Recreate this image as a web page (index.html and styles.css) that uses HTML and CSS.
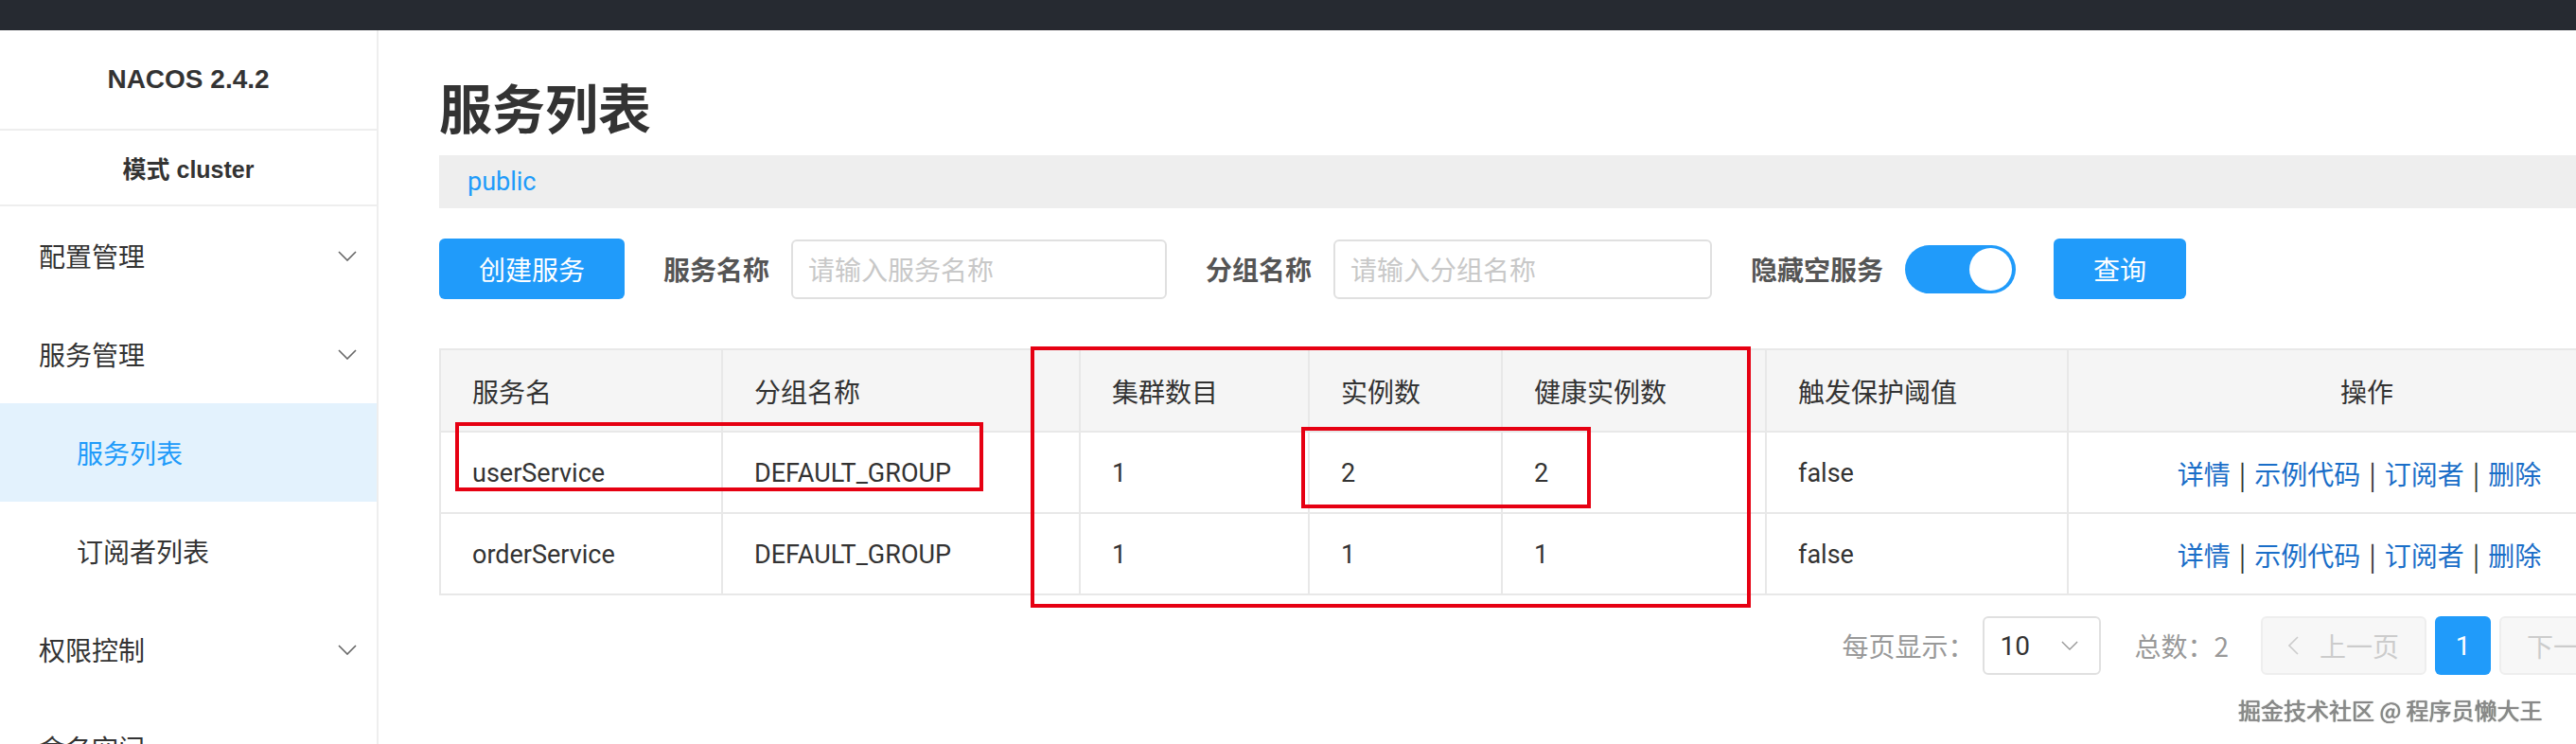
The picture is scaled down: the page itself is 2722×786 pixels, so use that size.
FILE: index.html
```html
<!DOCTYPE html>
<html lang="zh-CN">
<head>
<meta charset="utf-8">
<title>Nacos 服务列表</title>
<link rel="stylesheet" href="styles.css">
</head>
<body>
<div class="topbar"></div>
<div class="layout">
  <aside class="sidebar">
    <div class="brand">NACOS 2.4.2</div>
    <div class="mode">模式 cluster</div>
    <nav class="menu">
      <div class="menu-item"><span>配置管理</span><svg class="chev" viewBox="0 0 20 11"><polyline points="1,1 10,10 19,1"/></svg></div>
      <div class="menu-item"><span>服务管理</span><svg class="chev" viewBox="0 0 20 11"><polyline points="1,1 10,10 19,1"/></svg></div>
      <div class="menu-sub active">服务列表</div>
      <div class="menu-sub">订阅者列表</div>
      <div class="menu-item"><span>权限控制</span><svg class="chev" viewBox="0 0 20 11"><polyline points="1,1 10,10 19,1"/></svg></div>
      <div class="menu-item"><span>命名空间</span></div>
    </nav>
  </aside>
  <main class="main">
    <div class="content">
      <h1 class="title">服务列表</h1>
      <div class="crumb">public</div>
      <div class="toolbar">
        <button class="btn btn-create">创建服务</button>
        <div class="field">
          <span class="field-label">服务名称</span>
          <input class="input input-name" placeholder="请输入服务名称">
        </div>
        <div class="field">
          <span class="field-label">分组名称</span>
          <input class="input input-group" placeholder="请输入分组名称">
        </div>
        <div class="field">
          <span class="field-label">隐藏空服务</span>
          <span class="switch"><span class="knob"></span></span>
        </div>
        <button class="btn btn-query">查询</button>
      </div>
      <table class="grid">
        <colgroup>
          <col class="c1"><col class="c2"><col class="c3"><col class="c4"><col class="c5"><col class="c6"><col class="c7">
        </colgroup>
        <thead>
          <tr>
            <th>服务名</th><th>分组名称</th><th>集群数目</th><th>实例数</th><th>健康实例数</th><th>触发保护阈值</th><th class="center">操作</th>
          </tr>
        </thead>
        <tbody>
          <tr>
            <td>userService</td><td>DEFAULT_GROUP</td><td>1</td><td>2</td><td>2</td><td>false</td>
            <td class="center ops-cell"><span class="ops"><a>详情</a><i>|</i><a>示例代码</a><i>|</i><a>订阅者</a><i>|</i><a>删除</a></span></td>
          </tr>
          <tr>
            <td>orderService</td><td>DEFAULT_GROUP</td><td>1</td><td>1</td><td>1</td><td>false</td>
            <td class="center ops-cell"><span class="ops"><a>详情</a><i>|</i><a>示例代码</a><i>|</i><a>订阅者</a><i>|</i><a>删除</a></span></td>
          </tr>
        </tbody>
      </table>
      <div class="pager">
        <span class="pager-text">每页显示：</span>
        <span class="select"><span>10</span><svg class="select-arrow" viewBox="0 0 20 11"><polyline points="1,1 10,10 19,1"/></svg></span>
        <span class="pager-text total">总数：2</span>
        <span class="page-btn disabled prev"><svg class="arrow-l" viewBox="0 0 11 20"><polyline points="10,1 1,10 10,19"/></svg>上一页</span>
        <span class="page-btn current">1</span>
        <span class="page-btn disabled next">下一页<svg class="arrow-r" viewBox="0 0 11 20"><polyline points="1,1 10,10 1,19"/></svg></span>
      </div>
    </div>
  </main>
</div>
<div class="mark mark-a"></div>
<div class="mark mark-b"></div>
<div class="mark mark-c"></div>
<div class="watermark">掘金技术社区 @ 程序员懒大王</div>
</body>
</html>
```
FILE: styles.css
```css
* { box-sizing: border-box; }
html, body {
  margin: 0;
  padding: 0;
  width: 2722px;
  height: 786px;
  overflow: hidden;
  background: #fff;
  font-family: "Noto Sans CJK SC", "Noto Sans", sans-serif;
  font-size: 28px;
  color: #333;
}
.topbar {
  height: 32px;
  background: #262a31;
}
.layout {
  display: flex;
  height: 754px;
}
.sidebar {
  width: 400px;
  flex: none;
  border-right: 2px solid #eeeeee;
  overflow: hidden;
}
.brand {
  height: 106px;
  border-bottom: 2px solid #eeeeee;
  display: flex;
  align-items: center;
  justify-content: center;
  font-family: "Liberation Sans", Arial, sans-serif;
  font-weight: 700;
  font-size: 28px;
  color: #333;
}
.mode {
  height: 80px;
  border-bottom: 2px solid #eeeeee;
  display: flex;
  align-items: center;
  justify-content: center;
  font-family: "Liberation Sans", "Noto Sans CJK SC", sans-serif;
  font-weight: 700;
  font-size: 25px;
  color: #333;
}
.menu-item, .menu-sub {
  height: 104px;
  display: flex;
  align-items: center;
  justify-content: space-between;
  padding: 0 21px 0 41px;
  font-size: 28px;
  color: #333;
}
.menu-sub {
  padding-left: 81px;
}
.menu-sub.active {
  background: #e3f2fd;
  color: #209bfa;
}
.chev {
  width: 20px;
  height: 11px;
  fill: none;
  stroke: #666;
  stroke-width: 1.6;
}
.main {
  flex: 1;
  overflow: hidden;
}
.content {
  width: 2416px;
  padding-left: 64px;
}
.title {
  margin: 52px 0 0;
  height: 56px;
  line-height: 56px;
  font-size: 56px;
  font-weight: 700;
  color: #333;
}
.crumb {
  margin-top: 24px;
  height: 56px;
  line-height: 56px;
  background: #eeeeee;
  padding-left: 30px;
  color: #209bfa;
  font-family: "Roboto", "Noto Sans CJK SC", sans-serif;
  font-size: 27px;
}
.toolbar {
  margin-top: 32px;
  display: flex;
  align-items: center;
  height: 64px;
}
.btn {
  height: 64px;
  border: none;
  border-radius: 6px;
  background: #209bfa;
  color: #fff;
  font-family: inherit;
  font-size: 28px;
  padding: 0;
}
.btn-create { width: 196px; }
.btn-query { width: 140px; margin-left: 40px; }
.field {
  display: flex;
  align-items: center;
  margin-left: 41px;
}
.field-label {
  font-weight: 700;
  color: #555;
  margin-right: 23px;
}
.input {
  height: 63px;
  border: 2px solid #e0e0e0;
  border-radius: 6px;
  padding: 0 16px;
  font-family: inherit;
  font-size: 28px;
  color: #333;
  outline: none;
}
.input::placeholder { color: #c8c8c8; }
.input-name { width: 397px; }
.input-group { width: 400px; }
.switch {
  position: relative;
  width: 117px;
  height: 51px;
  border-radius: 26px;
  background: #209bfa;
  display: inline-block;
}
.knob {
  position: absolute;
  right: 4px;
  top: 3px;
  width: 45px;
  height: 45px;
  border-radius: 50%;
  background: #fff;
}
.grid {
  margin-top: 52px;
  width: 2352px;
  border-collapse: collapse;
  table-layout: fixed;
}
.c1 { width: 298px; }
.c2 { width: 378px; }
.c3 { width: 242px; }
.c4 { width: 204px; }
.c5 { width: 279px; }
.c6 { width: 319px; }
.c7 { width: 632px; }
.grid th, .grid td {
  border: 2px solid #e8e8e8;
  text-align: left;
  padding: 0 0 0 33px;
  font-weight: 400;
  font-size: 28px;
  color: #333;
}
.grid th {
  height: 87px;
  background: #f5f5f5;
}
.grid td {
  height: 86px;
  font-family: "Roboto", "Noto Sans CJK SC", sans-serif;
  font-size: 27px;
  padding-top: 2px;
}
.grid .center {
  text-align: center;
  padding-left: 0;
}
.grid .ops-cell {
  padding-right: 16px;
}
.ops {
  font-family: "Noto Sans CJK SC", sans-serif;
  font-size: 28px;
}
.ops a {
  color: #1a6ec8;
}
.ops i {
  font-style: normal;
  color: #333;
  margin: 0 9px;
}
.pager {
  margin-top: 22px;
  width: 2352px;
  display: flex;
  justify-content: flex-end;
  align-items: center;
  height: 62px;
}
.pager-text {
  color: #999;
  margin-right: 9px;
}
.pager-text.total {
  margin-left: 35px;
  margin-right: 34px;
}
.select {
  width: 125px;
  height: 62px;
  border: 2px solid #e0e0e0;
  border-radius: 6px;
  display: flex;
  align-items: center;
  justify-content: space-between;
  padding: 0 22px 0 16px;
  color: #333;
  font-family: "Roboto", sans-serif;
}
.select-arrow {
  width: 18px;
  height: 10px;
  fill: none;
  stroke: #999;
  stroke-width: 1.5;
}
.page-btn {
  height: 62px;
  border-radius: 6px;
  display: flex;
  align-items: center;
  justify-content: center;
}
.page-btn.disabled {
  width: 175px;
  background: #f7f7f7;
  border: 2px solid #eeeeee;
  color: #cccccc;
}
.page-btn.current {
  width: 59px;
  margin: 0 9px;
  background: #209bfa;
  color: #fff;
  font-family: "Roboto", sans-serif;
}
.arrow-l, .arrow-r {
  width: 11px;
  height: 20px;
  fill: none;
  stroke: #cccccc;
  stroke-width: 1.6;
}
.arrow-l { margin-right: 22px; }
.arrow-r { margin-left: 22px; }
.mark {
  position: absolute;
  border: 4px solid #e60012;
}
.mark-a { left: 481px; top: 446px; width: 558px; height: 73px; }
.mark-b { left: 1089px; top: 366px; width: 761px; height: 276px; }
.mark-c { left: 1375px; top: 451px; width: 306px; height: 86px; }
.watermark {
  position: absolute;
  left: 2365px;
  top: 733px;
  font-size: 24px;
  line-height: 34px;
  color: #8a8a8a;
  text-shadow: 0 0 1px #444;
}
```
